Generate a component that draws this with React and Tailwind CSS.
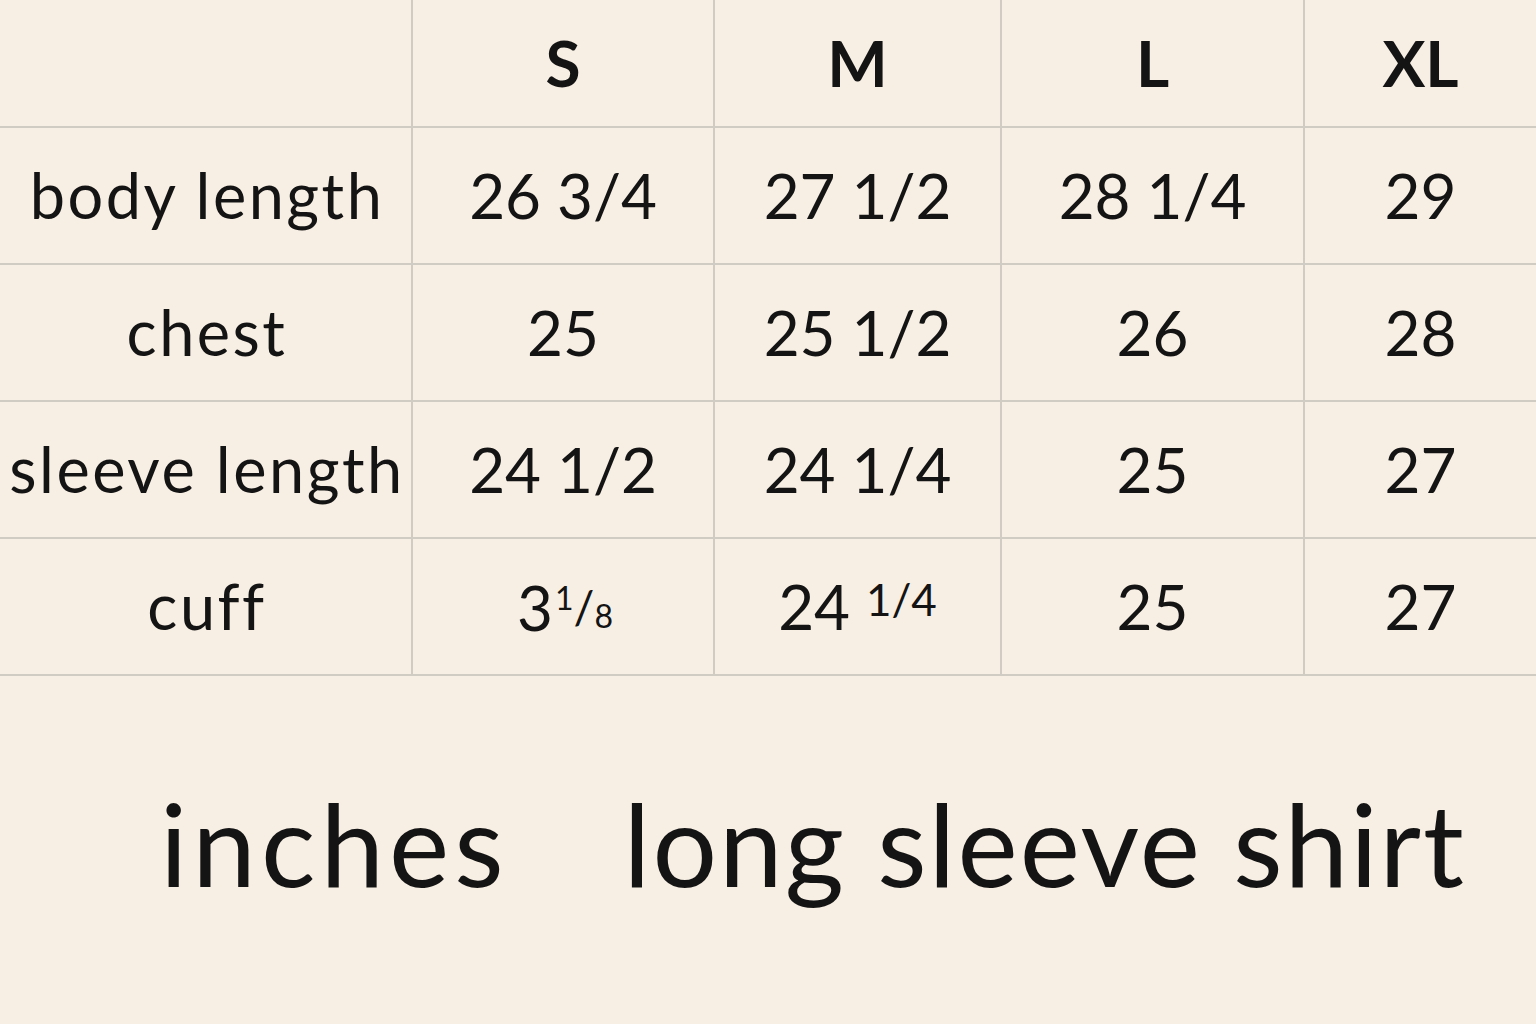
const sizes = ["S", "M", "L", "XL"];

const rows = [
  { label: "body length", values: ["26 3/4", "27 1/2", "28 1/4", "29"] },
  { label: "chest", values: ["25", "25 1/2", "26", "28"] },
  { label: "sleeve length", values: ["24 1/2", "24 1/4", "25", "27"] },
  { label: "cuff", values: ["cuff-s", "cuff-m", "25", "27"] },
];

function Value({ v }) {
  if (v === "cuff-s") {
    return (
      <span className="flex items-center leading-none pl-[4px]">
        <span>3</span>
        <span className="flex h-[46px] leading-none ml-[2px]">
          <span className="text-[32px] self-start -mt-[2px]">1</span>
          <span className="text-[46px] self-center">/</span>
          <span className="text-[32px] self-end -mb-[2px]">8</span>
        </span>
      </span>
    );
  }
  if (v === "cuff-m") {
    return (
      <span>
        24 <span className="text-[44px] align-[14px]">1/4</span>
      </span>
    );
  }
  return <span>{v}</span>;
}

function Cell({ children, last, className = "" }) {
  return (
    <div
      className={`flex items-center justify-center border-b-2 border-[#d0cbc3] ${
        last ? "" : "border-r-2"
      } ${className}`}
    >
      {children}
    </div>
  );
}

export default function App() {
  return (
    <div
      className="w-[1536px] h-[1024px] bg-[#f8efe4] text-[#141414] overflow-hidden"
      style={{ fontFamily: "Lato, 'Noto Sans', sans-serif" }}
    >
      <div className="grid grid-cols-[413px_302px_287px_303px_231px] grid-rows-[128px_137px_137px_137px_137px]">
        <Cell />
        {sizes.map((s, i) => (
          <Cell key={s} last={i === sizes.length - 1} className="text-[64px] font-bold">
            {s}
          </Cell>
        ))}
        {rows.map((r) => (
          <div key={r.label} className="contents">
            <Cell className="text-[63px] tracking-[2.5px] pl-[3px]">{r.label}</Cell>
            {r.values.map((v, i) => (
              <Cell key={i} last={i === r.values.length - 1} className="text-[62px]">
                <Value v={v} />
              </Cell>
            ))}
          </div>
        ))}
      </div>
      <div className="flex items-baseline pl-[160px] pt-[110px] gap-[115px] text-[114px] leading-none">
        <span className="tracking-[5px]">inches</span>
        <span className="tracking-[2px]">long sleeve shirt</span>
      </div>
    </div>
  );
}
